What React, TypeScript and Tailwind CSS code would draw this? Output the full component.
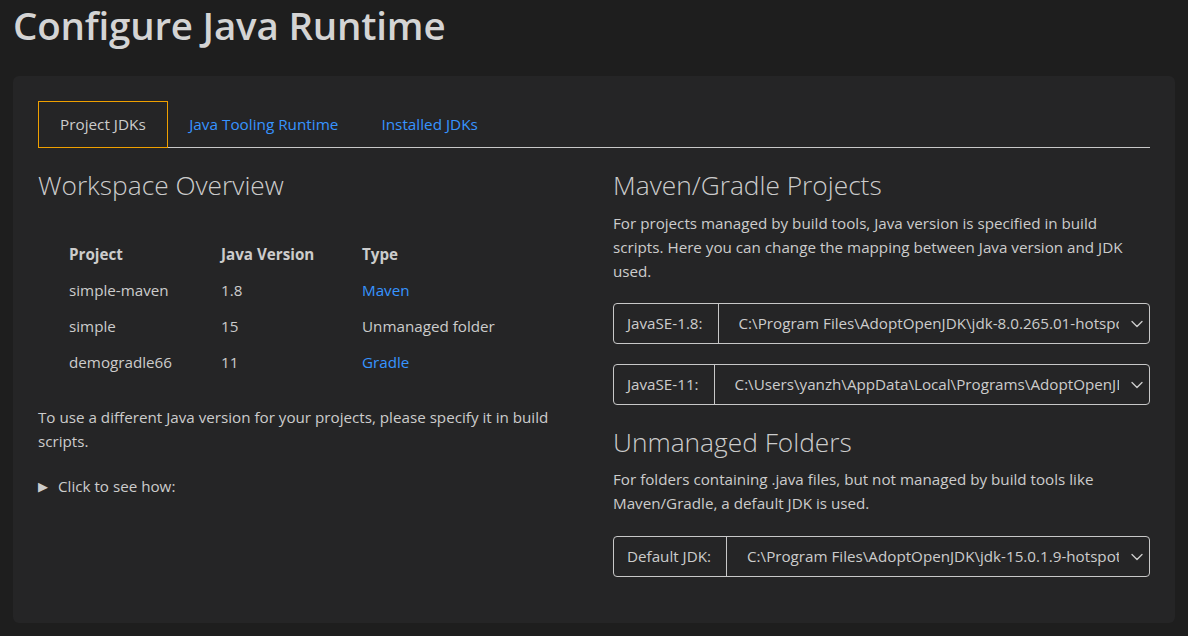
import React from 'react';
import { ChevronDown } from 'lucide-react';

const projects = [
    { name: 'simple-maven', version: '1.8', type: 'Maven', link: true },
    { name: 'simple', version: '15', type: 'Unmanaged folder', link: false },
    { name: 'demogradle66', version: '11', type: 'Gradle', link: true }
];

const JdkSelect = ({ label, value }: { label: string; value: string }) => (
    <div className="flex h-[41px] items-stretch rounded-[4px] border border-[#c8c8c8] text-[15.2px] text-[#cccccc]">
        <div className="flex items-center border-r border-[#c8c8c8] pl-[13px] pr-[15px]">{label}</div>
        <div className="flex min-w-0 flex-1 items-center pl-[20px] pr-[2px]">
            <span className="flex-1 overflow-hidden whitespace-nowrap">{value}</span>
            <ChevronDown className="ml-[8px] h-[20px] w-[20px] shrink-0 text-[#cccccc]" strokeWidth={1.6} />
        </div>
    </div>
);

const App = () => {
    return (
        <div
            className="h-screen overflow-hidden bg-[#1e1e1e] px-[13px] text-[#cccccc]"
            style={{ fontFamily: '"Open Sans", "Noto Sans", sans-serif' }}
        >
            <h1 className="h-[76px] pt-[1px] text-[38.5px] leading-[48px] font-semibold tracking-[-0.2px] text-[#d4d4d4]">
                Configure Java Runtime
            </h1>

            <div className="h-[547px] w-[1162px] rounded-[6px] bg-[#252526] px-[25px] pt-[25px]">
                {/* tabs */}
                <div className="flex h-[47px] items-stretch border-b border-[#c8c8c8] text-[15.3px]">
                    <div className="-mb-px flex items-center border border-[#f0a000] bg-[#252526] px-[21px] text-[#cccccc]">
                        Project JDKs
                    </div>
                    <div className="flex items-center px-[21.5px] text-[#3794ff]">Java Tooling Runtime</div>
                    <div className="flex items-center px-[21.5px] text-[#3794ff]">Installed JDKs</div>
                </div>

                <div className="grid grid-cols-2 gap-x-[38px]">
                    {/* left column */}
                    <div>
                        <h2 className="mt-[20px] text-[26.3px] leading-[34px] font-light text-[#cccccc]">Workspace Overview</h2>
                        <table className="mt-[34px] ml-[31px] text-[15.2px] leading-[36px]">
                            <thead>
                                <tr className="font-bold">
                                    <td className="w-[152px]">Project</td>
                                    <td className="w-[141px]">Java Version</td>
                                    <td>Type</td>
                                </tr>
                            </thead>
                            <tbody>
                                {projects.map((p) => (
                                    <tr key={p.name}>
                                        <td>{p.name}</td>
                                        <td>{p.version}</td>
                                        <td className={p.link ? 'text-[#3794ff]' : ''}>{p.type}</td>
                                    </tr>
                                ))}
                            </tbody>
                        </table>
                        <p className="mt-[25px] text-[15.2px] leading-[24px]">
                            To use a different Java version for your projects, please specify it in build scripts.
                        </p>
                        <div className="mt-[21px] flex items-center text-[15.2px] leading-[24px]">
                            <span className="mr-[10px] text-[13px]">▶</span>
                            Click to see how:
                        </div>
                    </div>

                    {/* right column */}
                    <div>
                        <h2 className="mt-[20px] text-[26.3px] leading-[34px] font-light text-[#cccccc]">Maven/Gradle Projects</h2>
                        <p className="mt-[9px] pr-[10px] text-[15.2px] leading-[24px]">
                            For projects managed by build tools, Java version is specified in build scripts. Here you can change the mapping between Java version and JDK used.
                        </p>
                        <div className="mt-[20px] flex flex-col gap-[20px]">
                            <JdkSelect label="JavaSE-1.8:" value="C:\Program Files\AdoptOpenJDK\jdk-8.0.265.01-hotspot" />
                            <JdkSelect label="JavaSE-11:" value="C:\Users\yanzh\AppData\Local\Programs\AdoptOpenJDK\jdk-11" />
                        </div>
                        <h2 className="mt-[20px] text-[26.3px] leading-[34px] font-light text-[#cccccc]">Unmanaged Folders</h2>
                        <p className="mt-[8px] pr-[10px] text-[15.2px] leading-[24px]">
                            For folders containing .java files, but not managed by build tools like Maven/Gradle, a default JDK is used.
                        </p>
                        <div className="mt-[21px]">
                            <JdkSelect label="Default JDK:" value="C:\Program Files\AdoptOpenJDK\jdk-15.0.1.9-hotspot" />
                        </div>
                    </div>
                </div>
            </div>
        </div>
    );
};

export default App;
